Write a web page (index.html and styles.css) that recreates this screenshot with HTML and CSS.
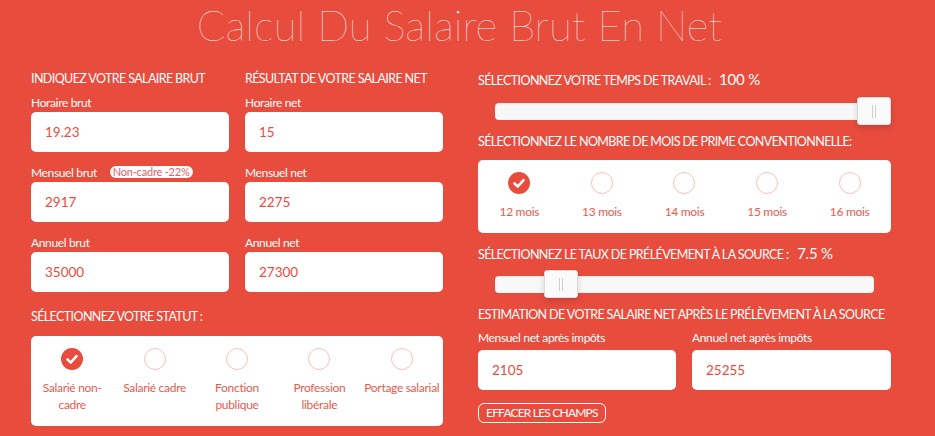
FILE: index.html
```html
<!DOCTYPE html>
<html lang="fr">
<head>
<meta charset="utf-8">
<title>Calcul Du Salaire Brut En Net</title>
<link rel="stylesheet" href="styles.css">
</head>
<body>
<div class="page">
  <h1 class="title">Calcul Du Salaire Brut En Net</h1>
  <div class="main">
    <div class="col">
      <div class="pair">
        <div class="sub">
          <h2 class="heading">INDIQUEZ VOTRE SALAIRE BRUT</h2>
          <div class="field">
            <label class="label">Horaire brut</label>
            <div class="input">19.23</div>
          </div>
          <div class="field">
            <label class="label">Mensuel brut <span class="badge">Non-cadre -22%</span></label>
            <div class="input">2917</div>
          </div>
          <div class="field">
            <label class="label">Annuel brut</label>
            <div class="input">35000</div>
          </div>
        </div>
        <div class="sub">
          <h2 class="heading">RÉSULTAT DE VOTRE SALAIRE NET</h2>
          <div class="field">
            <label class="label">Horaire net</label>
            <div class="input">15</div>
          </div>
          <div class="field">
            <label class="label">Mensuel net</label>
            <div class="input">2275</div>
          </div>
          <div class="field">
            <label class="label">Annuel net</label>
            <div class="input">27300</div>
          </div>
        </div>
      </div>
      <h2 class="heading status-heading">SÉLECTIONNEZ VOTRE STATUT :</h2>
      <div class="card">
        <div class="opt">
          <span class="radio checked"><svg viewBox="0 0 22 22" width="22" height="22"><polyline points="6.5,11.5 9.8,14.5 15.5,8.2" fill="none" stroke="#fff" stroke-width="2.6" stroke-linecap="round" stroke-linejoin="round"/></svg></span>
          <span class="opt-label">Salarié non-<br>cadre</span>
        </div>
        <div class="opt"><span class="radio"></span><span class="opt-label">Salarié cadre</span></div>
        <div class="opt"><span class="radio"></span><span class="opt-label">Fonction<br>publique</span></div>
        <div class="opt"><span class="radio"></span><span class="opt-label">Profession<br>libérale</span></div>
        <div class="opt"><span class="radio"></span><span class="opt-label">Portage salarial</span></div>
      </div>
    </div>
    <div class="col">
      <h2 class="heading">SÉLECTIONNEZ VOTRE TEMPS DE TRAVAIL : <span class="value">100 %</span></h2>
      <div class="slider">
        <div class="track">
          <span class="handle" style="left: 100%"><i></i><i></i></span>
        </div>
      </div>
      <h2 class="heading mois-heading">SÉLECTIONNEZ LE NOMBRE DE MOIS DE PRIME CONVENTIONNELLE:</h2>
      <div class="card card-mois">
        <div class="opt">
          <span class="radio checked"><svg viewBox="0 0 22 22" width="22" height="22"><polyline points="6.5,11.5 9.8,14.5 15.5,8.2" fill="none" stroke="#fff" stroke-width="2.6" stroke-linecap="round" stroke-linejoin="round"/></svg></span>
          <span class="opt-label">12 mois</span>
        </div>
        <div class="opt"><span class="radio"></span><span class="opt-label">13 mois</span></div>
        <div class="opt"><span class="radio"></span><span class="opt-label">14 mois</span></div>
        <div class="opt"><span class="radio"></span><span class="opt-label">15 mois</span></div>
        <div class="opt"><span class="radio"></span><span class="opt-label">16 mois</span></div>
      </div>
      <h2 class="heading taux-heading">SÉLECTIONNEZ LE TAUX DE PRÉLÉVEMENT À LA SOURCE : <span class="value">7.5 %</span></h2>
      <div class="slider slider-taux">
        <div class="track">
          <span class="handle" style="left: 17.5%"><i></i><i></i></span>
        </div>
      </div>
      <h2 class="heading est-heading">ESTIMATION DE VOTRE SALAIRE NET APRÈS LE PRÉLÈVEMENT À LA SOURCE</h2>
      <div class="pair pair-est">
        <div class="field">
          <label class="label">Mensuel net après impôts</label>
          <div class="input">2105</div>
        </div>
        <div class="field">
          <label class="label">Annuel net après impôts</label>
          <div class="input">25255</div>
        </div>
      </div>
      <button class="btn">EFFACER LES CHAMPS</button>
    </div>
  </div>
</div>
</body>
</html>
```
FILE: styles.css
```css
html, body {
  margin: 0;
  padding: 0;
}
body {
  background: #e84c3d;
  font-family: Lato, "Open Sans", sans-serif;
  color: #fff;
  min-height: 436px;
}
.title {
  margin: 0;
  height: 70px;
  font-family: Lato, "Open Sans", sans-serif;
  font-weight: 100;
  font-size: 42px;
  line-height: 50px;
  text-align: center;
  letter-spacing: 0;
  width: 919px;
}
.main {
  display: grid;
  grid-template-columns: 412px 413px;
  column-gap: 35px;
  padding-left: 31px;
}
.col {
  display: flex;
  flex-direction: column;
  align-items: stretch;
}
.pair {
  display: grid;
  grid-template-columns: 198px 198px;
  column-gap: 16px;
}
.heading {
  margin: 0;
  font-size: 12.5px;
  font-weight: 400;
  line-height: 18px;
  height: 18px;
  white-space: nowrap;
  letter-spacing: -0.6px;
}
.heading .value {
  font-size: 15px;
  margin-left: 6px;
  letter-spacing: -0.2px;
}
.sub .heading {
  margin-bottom: 7px;
}
.field {
  margin-bottom: 13px;
}
.label {
  display: block;
  font-size: 12px;
  line-height: 16px;
  height: 16px;
  margin-bottom: 1px;
  white-space: nowrap;
  letter-spacing: -0.35px;
}
.badge {
  display: inline-block;
  background: #fff;
  color: #e95d68;
  font-size: 11px;
  line-height: 12px;
  padding: 0 3px;
  border-radius: 6px;
  margin-left: 10px;
  letter-spacing: -0.2px;
  vertical-align: 1px;
}
.input {
  height: 40px;
  background: #fff;
  border-radius: 5px;
  box-sizing: border-box;
  padding-left: 14px;
  font-size: 13.5px;
  line-height: 40px;
  color: #e74c3c;
}
.status-heading {
  margin-top: 3px;
  margin-bottom: 10px;
}
.card {
  background: #fff;
  border-radius: 5px;
  display: grid;
  grid-template-columns: repeat(5, 1fr);
  padding: 12px 0 13px;
}
.opt {
  display: flex;
  flex-direction: column;
  align-items: center;
  text-align: center;
}
.radio {
  width: 22px;
  height: 22px;
  border-radius: 50%;
  box-sizing: border-box;
  border: 1.5px solid #f7c3bc;
  display: block;
}
.radio.checked {
  border: none;
  background: #e74c3c;
}
.radio svg {
  display: block;
}
.opt-label {
  margin-top: 9px;
  font-size: 12px;
  line-height: 17px;
  color: #ea5a4e;
  letter-spacing: -0.3px;
}
.slider {
  padding: 15px 17px 0;
  height: 30px;
}
.track {
  position: relative;
  height: 17px;
  background: #f8f8f8;
  border-radius: 4px;
  box-shadow: inset 0 1px 2px rgba(0,0,0,0.08);
}
.handle {
  position: absolute;
  top: -6px;
  width: 34px;
  height: 28px;
  margin-left: -17px;
  box-sizing: border-box;
  background: #fafafa;
  border: 1px solid #dcdcdc;
  border-radius: 3px;
  box-shadow: 0 3px 6px rgba(0,0,0,0.15);
  display: flex;
  justify-content: center;
  align-items: center;
  gap: 2px;
}
.handle i {
  display: block;
  width: 1px;
  height: 13px;
  background: #cfcfcf;
}
.mois-heading {
  margin-top: 0;
  margin-bottom: 9px;
}
.taux-heading {
  margin-top: 11px;
}
.slider-taux {
  padding-top: 14px;
}
.est-heading {
  margin-top: 0;
  margin-bottom: 6px;
}
.pair-est {
  grid-template-columns: 198px 199px;
}
.pair-est .field {
  margin-bottom: 13px;
}
.pair-est .label {
  margin-bottom: 4px;
}
.btn {
  align-self: flex-start;
  font-family: inherit;
  background: transparent;
  color: #fff;
  border: 1px solid #fff;
  border-radius: 6px;
  font-size: 12px;
  height: 20px;
  line-height: 18px;
  padding: 0 7px;
  letter-spacing: -0.8px;
  cursor: pointer;
}
```
